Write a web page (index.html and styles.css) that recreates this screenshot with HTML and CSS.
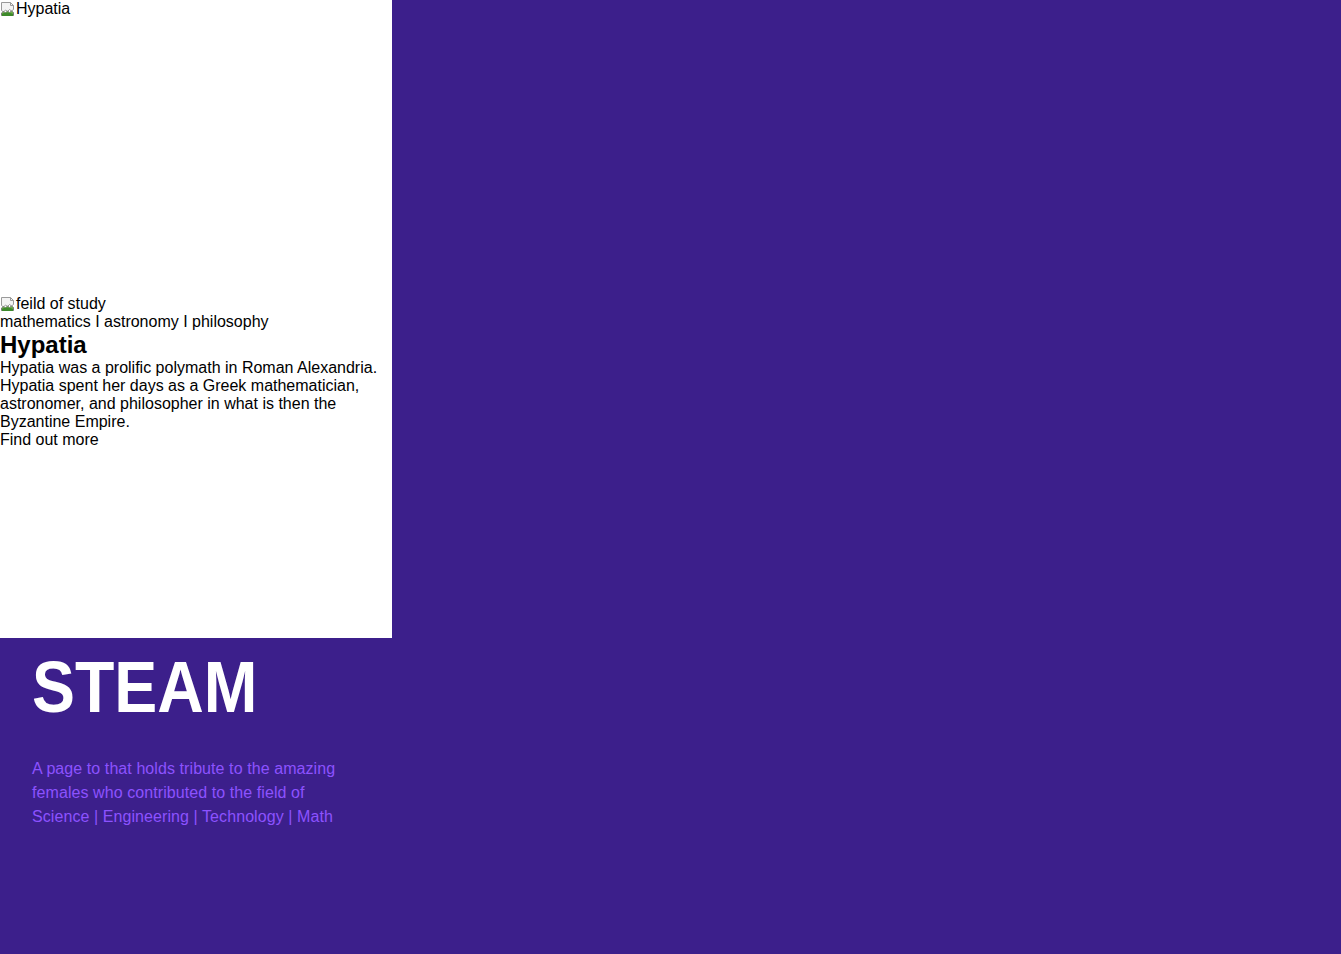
FILE: index.html
```html
<!DOCTYPE html>
<html lang="en">
<head>
<meta charset="utf-8">
<title>STEAM</title>
<link rel="stylesheet" href="styles.css">
</head>
<body>
<main class="card">
  <div class="photo">
    <span class="img-alt"><svg class="broken" width="16" height="16" viewBox="0 0 16 16"><path d="M1.5 1.5h9l3 3v4l-2 1.5-2-1.5-2 2-2-1.5-2 2-2-1.5z" fill="#f4f4f4" stroke="#9a9a9a"/><path d="M10.5 1.5v3h3" fill="none" stroke="#9a9a9a"/><path d="M1.5 12l2-1.5 2 1.5 2-2 2 1.5 2-1.5 2 1.5v3h-12z" fill="#6fb24a" stroke="#7a7a7a"/><path d="M2 13c3-2 6-2 11 0v2H2z" fill="#3d8a2a"/></svg>Hypatia</span>
  </div>
  <div class="field"><span class="img-alt"><svg class="broken" width="16" height="16" viewBox="0 0 16 16"><path d="M1.5 1.5h9l3 3v4l-2 1.5-2-1.5-2 2-2-1.5-2 2-2-1.5z" fill="#f4f4f4" stroke="#9a9a9a"/><path d="M10.5 1.5v3h3" fill="none" stroke="#9a9a9a"/><path d="M1.5 12l2-1.5 2 1.5 2-2 2 1.5 2-1.5 2 1.5v3h-12z" fill="#6fb24a" stroke="#7a7a7a"/><path d="M2 13c3-2 6-2 11 0v2H2z" fill="#3d8a2a"/></svg>feild of study</span></div>
  <p class="subjects">mathematics I astronomy I philosophy</p>
  <h2 class="name">Hypatia</h2>
  <p class="bio">Hypatia was a prolific polymath in Roman Alexandria. Hypatia spent her days as a Greek mathematician, astronomer, and philosopher in what is then the Byzantine Empire.</p>
  <a class="more">Find out more</a>
</main>
<header class="hero">
  <h1 class="title"><span class="title-text">STEAM</span></h1>
  <p class="tagline">A page to that holds tribute to the amazing females who contributed to the field of Science | Engineering | Technology | Math</p>
</header>
</body>
</html>
```
FILE: styles.css
```css
html, body {
  margin: 0;
  padding: 0;
}
body {
  background: #3c1f8b;
  font-family: "Liberation Sans", Arial, Helvetica, sans-serif;
  font-size: 16px;
  line-height: 18px;
  color: #000;
  min-height: 954px;
}
.card {
  display: block;
  width: 392px;
  height: 638px;
  background: #fff;
}
.photo {
  height: 295px;
}
.img-alt {
  display: inline-flex;
  align-items: flex-start;
}
.broken {
  flex: none;
  margin-top: 1px;
}
.field {
  height: 18px;
}
.subjects {
  margin: 0;
}
.name {
  margin: 0;
  font-size: 24px;
  line-height: 28px;
  font-weight: bold;
}
.bio {
  margin: 0;
}
.more {
  display: block;
  color: #000;
  text-decoration: none;
}
.hero {
  padding: 13px 32px 0;
}
.title {
  margin: 0;
  font-size: 72px;
  line-height: 72px;
  font-weight: bold;
  color: #fff;
}
.title-text {
  display: inline-block;
  transform: scaleX(0.895);
  transform-origin: left center;
}
.tagline {
  margin: 34px 0 0;
  width: 320px;
  font-size: 16px;
  line-height: 24px;
  letter-spacing: 0.08px;
  color: #8c52ff;
}
```
